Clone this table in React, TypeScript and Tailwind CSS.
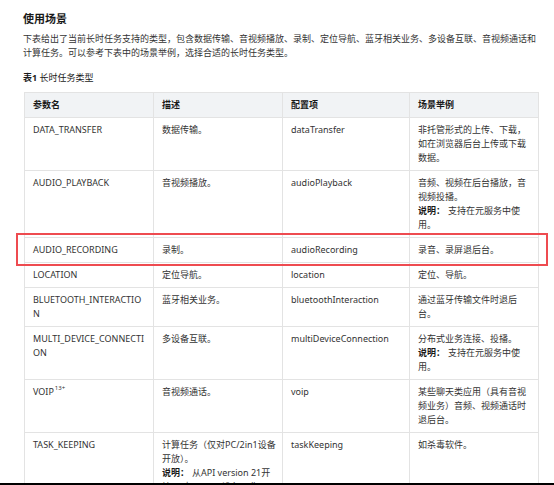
import React from "react";

type Row = {
  name: React.ReactNode;
  desc: React.ReactNode;
  key: string;
  example: React.ReactNode;
  highlight?: boolean;
  nowrapDesc?: boolean;
};

const Note = ({ children }: { children: React.ReactNode }) => (
  <>
    <br />
    <span className="font-bold text-[#191919]">说明：</span>
    <span className="ml-[3px]">{children}</span>
  </>
);

const rows: Row[] = [
  {
    name: "DATA_TRANSFER",
    desc: "数据传输。",
    key: "dataTransfer",
    example: "非托管形式的上传、下载，如在浏览器后台上传或下载数据。",
  },
  {
    name: "AUDIO_PLAYBACK",
    desc: "音视频播放。",
    key: "audioPlayback",
    example: (
      <>
        音频、视频在后台播放，音视频投播。
        <Note>支持在元服务中使用。</Note>
      </>
    ),
  },
  {
    name: "AUDIO_RECORDING",
    desc: "录制。",
    key: "audioRecording",
    example: "录音、录屏退后台。",
    highlight: true,
  },
  { name: "LOCATION", desc: "定位导航。", key: "location", example: "定位、导航。" },
  {
    name: (
      <>
        BLUETOOTH_INTERACTIO
        <br />N
      </>
    ),
    desc: "蓝牙相关业务。",
    key: "bluetoothInteraction",
    example: "通过蓝牙传输文件时退后台。",
  },
  {
    name: (
      <>
        MULTI_DEVICE_CONNECTI
        <br />
        ON
      </>
    ),
    desc: "多设备互联。",
    key: "multiDeviceConnection",
    example: (
      <>
        分布式业务连接、投播。
        <Note>支持在元服务中使用。</Note>
      </>
    ),
  },
  {
    name: (
      <>
        VOIP<sup className="relative -top-[1px] ml-px align-super text-[6px]">13+</sup>
      </>
    ),
    desc: "音视频通话。",
    key: "voip",
    example: "某些聊天类应用（具有音视频业务）音频、视频通话时退后台。",
  },
  {
    name: "TASK_KEEPING",
    desc: (
      <>
        计算任务（仅对PC/2in1设备
        <br />
        开放）。
        <br />
        <span className="font-bold text-[#191919]">说明：</span>
        <span className="ml-[3px]">从API version 21开</span>
        <br />
        始，对PC/2in1设备、非
        <br />
        PC/2in1设备均开放。
      </>
    ),
    key: "taskKeeping",
    example: "如杀毒软件。",
    nowrapDesc: true,
  },
];

const cell = "border border-[#e3e3e3] px-2 py-[5px] align-top break-all";

export default function App() {
  return (
    <div
      className="h-[485px] overflow-hidden border-b-2 border-black bg-white text-[#333333]"
      style={{ fontFamily: '"Noto Sans", "Noto Sans CJK SC", sans-serif' }}
    >
      <div className="pl-[23px] pr-[10px] pt-[10px]">
        <h2 className="text-[11px] font-bold leading-[17px] text-[#191919]">使用场景</h2>
        <p className="mt-[5px] whitespace-nowrap text-[9px] leading-[14px]">
          下表给出了当前长时任务支持的类型，包含数据传输、音视频播放、录制、定位导航、蓝牙相关业务、多设备互联、音视频通话和
          <br />
          计算任务。可以参考下表中的场景举例，选择合适的长时任务类型。
        </p>
        <div className="mt-[11px] text-[9px] leading-[14px] text-[#191919]">
          <span className="font-bold">表1</span> 长时任务类型
        </div>

        <table className="ml-px mt-[7px] w-[515px] table-fixed border-collapse text-[9px] leading-[14px]">
          <colgroup>
            <col className="w-[129px]" />
            <col className="w-[129px]" />
            <col className="w-[127px]" />
            <col />
          </colgroup>
          <thead>
            <tr className="bg-[#f1f3f5] text-left text-[#191919]">
              <th className={`${cell} font-bold`}>参数名</th>
              <th className={`${cell} font-bold`}>描述</th>
              <th className={`${cell} font-bold`}>配置项</th>
              <th className={`${cell} font-bold`}>场景举例</th>
            </tr>
          </thead>
          <tbody>
            {rows.map((r) => (
              <tr key={r.key}>
                <td className={`${cell} relative`}>
                  {r.highlight && (
                    <div className="pointer-events-none absolute -left-[9px] -top-[5px] h-[33px] w-[532px] border-2 border-[#ee4b50]" />
                  )}
                  {r.name}
                </td>
                <td className={r.nowrapDesc ? `${cell} whitespace-nowrap` : cell}>{r.desc}</td>
                <td className={cell}>{r.key}</td>
                <td className={cell}>{r.example}</td>
              </tr>
            ))}
          </tbody>
        </table>
      </div>
    </div>
  );
}
